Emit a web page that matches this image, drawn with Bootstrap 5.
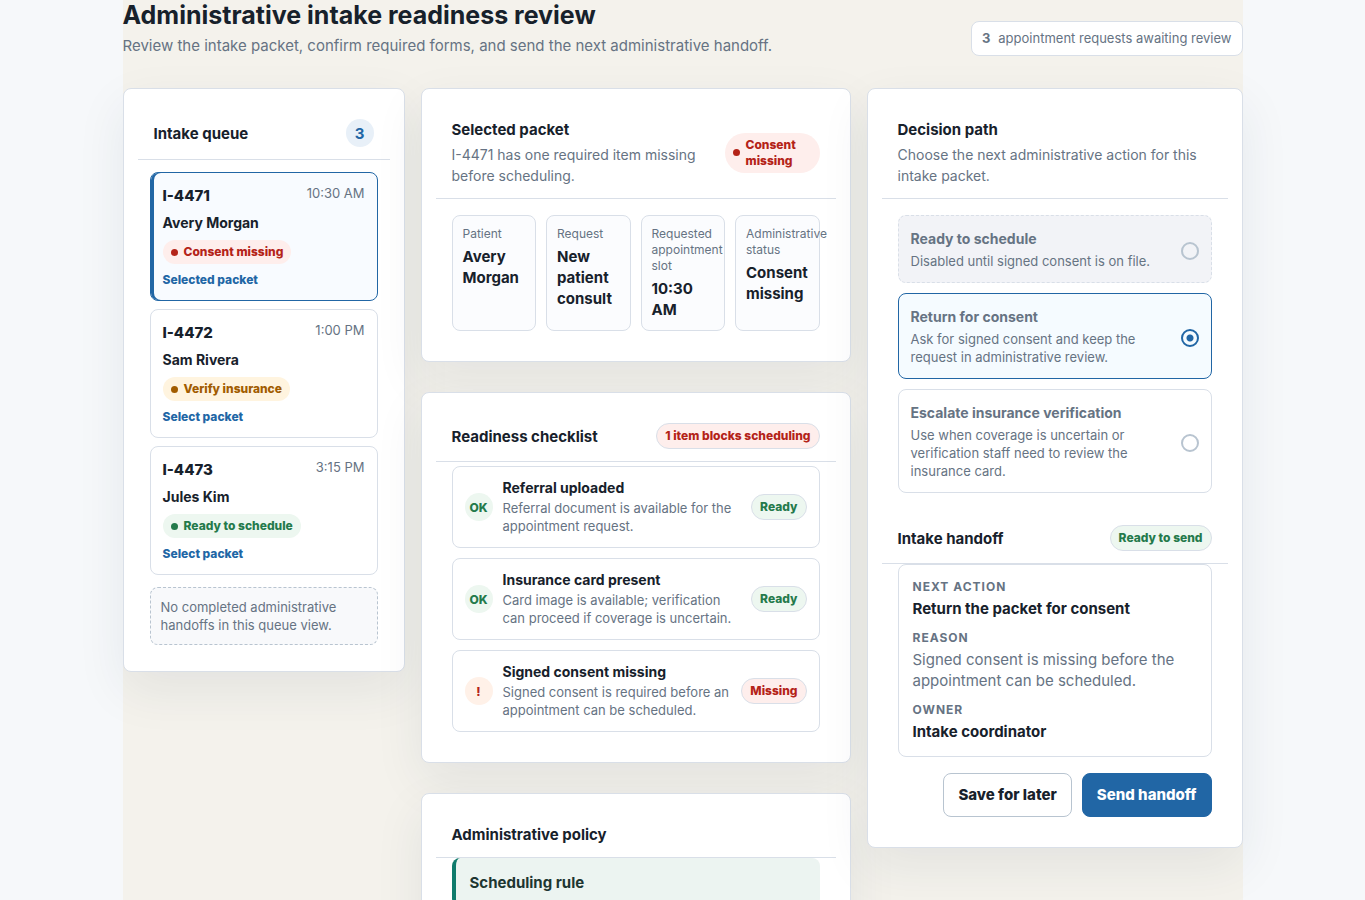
<!DOCTYPE html>
<html lang="en">
<head>
<meta charset="utf-8">
<meta name="viewport" content="width=device-width, initial-scale=1">
<title>Administrative intake readiness review</title>
<link href="https://cdn.jsdelivr.net/npm/bootstrap@5.3.0/dist/css/bootstrap.min.css" rel="stylesheet">
<style>
:root{--ink:#17212b;--muted:#667383;--line:#d9dfe8;--blue:#2166a5;--red:#b42318;--green:#247a4b;--amber:#a15c00}
body{font-family:Inter,sans-serif;font-size:15px;line-height:21px;color:var(--ink);background:#f6f8fa}
button{font-family:inherit}
.page{max-width:1120px;background:#f4f2ec;min-height:100vh}
h1{font-size:25px;line-height:30px;font-weight:700;margin:0 0 6px}
h2{font-size:15px;line-height:21px;font-weight:700;margin:0}
.sub{line-height:20px}
.soft{color:var(--muted)}
.chip{font-size:13px;line-height:17px;padding:8px 10px;border:1px solid var(--line);border-radius:8px;background:#fff;color:var(--muted)}
.board{display:grid;grid-template-columns:minmax(0,1fr);gap:16px;align-items:start;margin-top:32px}
@media (min-width:1100px){.board{grid-template-columns:282px minmax(0,1fr) 376px}}
.stack{display:grid;gap:30px}
.panel{background:#fff;border:1px solid var(--line);border-radius:8px;padding:14px;box-shadow:0 18px 50px rgba(24,50,71,.08)}
.panel-head{display:flex;align-items:center;justify-content:space-between;gap:12px;padding:16px 16px 12px;border-bottom:1px solid var(--line)}
.panel-head p{font-size:14px}
.count{width:28px;height:28px;border-radius:50%;background:#e8f0f8;color:var(--blue);font-weight:700;display:grid;place-items:center}
.queue{padding:12px;display:grid;gap:8px}
.packet{display:grid;gap:7px;justify-items:start;text-align:left;padding:12px 12px 11px;border:1px solid var(--line);border-radius:8px;background:#fff;color:var(--ink)}
.packet.active{border-color:var(--blue);background:#f8fbff;box-shadow:inset 3px 0 0 var(--blue)}
.packet-id{font-size:15px;line-height:21px;font-weight:800}
.packet-time{font-size:13px;line-height:17px;color:var(--muted)}
.packet-name{font-size:14px;line-height:19px;font-weight:700;margin-bottom:1px}
.packet-link{font-size:12px;line-height:18px;font-weight:800;color:var(--blue)}
.status{display:inline-flex;align-items:center;gap:6px;padding:4px 8px;border-radius:20px;font-size:12px;line-height:16px;font-weight:800}
.status::before{content:"";flex:none;width:7px;height:7px;border-radius:50%;background:currentColor}
.tag{flex:none;padding:4px 8px;border:1px solid var(--line);border-radius:20px;font-size:12px;line-height:16px;font-weight:800}
.is-red{background:#feeeec;color:var(--red)}
.is-green{background:#edf7f0;color:var(--green)}
.is-amber{background:#fff4df;color:var(--amber)}
.empty{margin-top:4px;padding:10px;border:1px dashed #b8c4d0;border-radius:8px;background:#f8f9fb;font-size:13px;line-height:18px;color:var(--muted)}
.wide{width:95px}
.facts{display:grid;grid-template-columns:repeat(4,minmax(0,1fr));gap:10px;padding:16px;margin:0}
.fact{padding:10px;border:1px solid var(--line);border-radius:8px;background:#fbfcfe}
.fact dt{font-size:12px;line-height:16px;font-weight:400;color:var(--muted);margin-bottom:4px}
.fact dd{font-weight:700;margin:0}
.checks{display:grid;gap:10px;padding:4px 16px 16px;margin:0;list-style:none}
.check{display:flex;align-items:center;gap:10px;padding:12px;border:1px solid var(--line);border-radius:8px}
.mark-dot{flex:none;width:28px;height:28px;border-radius:50%;display:grid;place-items:center;font-size:12px;font-weight:800}
.mark-dot.warn{background:#fff1e8;color:var(--red)}
.check h3{font-size:14px;line-height:18px;font-weight:700;margin:0 0 2px}
.note{font-size:13px;line-height:18px;color:var(--muted);margin:0}
.rule{margin:0 16px 16px;padding:14px;border-left:4px solid #0f7b6c;border-radius:8px;background:#ecf4f1;color:#1d3631}
.options{display:grid;gap:10px;padding:16px;margin:0}
.option{display:flex;align-items:center;justify-content:space-between;gap:12px;padding:12px;border:1px solid var(--line);border-radius:8px;color:var(--muted)}
.option b{display:block;font-size:14px;line-height:22px;font-weight:700;margin-bottom:2px}
.option .note{display:block;max-width:240px}
.option.off{border-style:dashed;background:#f2f3f7}
.option.on{border-color:var(--blue);background:#f5fbff}
.option input{appearance:none;flex:none;width:18px;height:18px;margin:4px 0 0;border:2px solid #b8c4d0;border-radius:50%}
.option input:checked{border-color:var(--blue);background:radial-gradient(circle,var(--blue) 3px,transparent 4px)}
.handoff{margin:0 16px;padding:14px;border:1px solid var(--line);border-radius:8px}
.handoff dt{font-size:12px;line-height:16px;font-weight:700;letter-spacing:1px;text-transform:uppercase;color:var(--muted);margin-bottom:3px}
.handoff dd{margin:0 0 11px}
.handoff dd:last-child{margin:0}
.actions{display:flex;justify-content:flex-end;gap:10px}
.act{min-height:44px;padding:8px 14px;border-radius:8px;font-size:15px;font-weight:800}
.act-plain{border-color:#b8c4d0;background:#fff;color:var(--ink)}
.act-main{background:var(--blue);border-color:var(--blue);color:#fff}
</style>
</head>
<body>
<main class="page mx-auto pb-5">
  <header class="d-flex flex-wrap justify-content-between align-items-end">
    <div>
      <h1>Administrative intake readiness review</h1>
      <p class="sub soft mb-0">Review the intake packet, confirm required forms, and send the next administrative handoff.</p>
    </div>
    <div class="chip d-flex gap-2"><strong>3</strong><span>appointment requests awaiting review</span></div>
  </header>

  <div class="board">
    <section class="panel">
      <div class="panel-head"><h2>Intake queue</h2><span class="count">3</span></div>
      <div class="queue">
        <button type="button" class="packet active" aria-pressed="true">
          <span class="d-flex justify-content-between w-100"><span class="packet-id">I-4471</span><span class="packet-time">10:30 AM</span></span>
          <span class="packet-name">Avery Morgan</span>
          <span class="status is-red">Consent missing</span>
          <span class="packet-link">Selected packet</span>
        </button>
        <button type="button" class="packet" aria-pressed="false">
          <span class="d-flex justify-content-between w-100"><span class="packet-id">I-4472</span><span class="packet-time">1:00 PM</span></span>
          <span class="packet-name">Sam Rivera</span>
          <span class="status is-amber">Verify insurance</span>
          <span class="packet-link">Select packet</span>
        </button>
        <button type="button" class="packet" aria-pressed="false">
          <span class="d-flex justify-content-between w-100"><span class="packet-id">I-4473</span><span class="packet-time">3:15 PM</span></span>
          <span class="packet-name">Jules Kim</span>
          <span class="status is-green">Ready to schedule</span>
          <span class="packet-link">Select packet</span>
        </button>
        <div class="empty">No completed administrative handoffs in this queue view.</div>
      </div>
    </section>

    <div class="stack">
      <section class="panel">
        <div class="panel-head">
          <div><h2 class="mb-1">Selected packet</h2><p class="soft mb-0">I-4471 has one required item missing before scheduling.</p></div>
          <span class="status is-red wide flex-shrink-0">Consent missing</span>
        </div>
        <dl class="facts">
          <div class="fact"><dt>Patient</dt><dd>Avery Morgan</dd></div>
          <div class="fact"><dt>Request</dt><dd>New patient consult</dd></div>
          <div class="fact"><dt>Requested appointment slot</dt><dd>10:30 AM</dd></div>
          <div class="fact"><dt>Administrative status</dt><dd>Consent missing</dd></div>
        </dl>
      </section>

      <section class="panel">
        <div class="panel-head"><h2>Readiness checklist</h2><span class="tag is-red">1 item blocks scheduling</span></div>
        <ul class="checks">
          <li class="check"><span class="mark-dot is-green">OK</span><div class="flex-grow-1"><h3>Referral uploaded</h3><p class="note">Referral document is available for the appointment request.</p></div><span class="tag is-green">Ready</span></li>
          <li class="check"><span class="mark-dot is-green">OK</span><div class="flex-grow-1"><h3>Insurance card present</h3><p class="note">Card image is available; verification can proceed if coverage is uncertain.</p></div><span class="tag is-green">Ready</span></li>
          <li class="check"><span class="mark-dot warn">!</span><div class="flex-grow-1"><h3>Signed consent missing</h3><p class="note">Signed consent is required before an appointment can be scheduled.</p></div><span class="tag is-red">Missing</span></li>
        </ul>
      </section>

      <section class="panel">
        <div class="panel-head"><h2>Administrative policy</h2></div>
        <div class="rule"><h2>Scheduling rule</h2></div>
      </section>
    </div>

    <section class="panel">
      <div class="panel-head"><div><h2 class="mb-1">Decision path</h2><p class="soft mb-0">Choose the next administrative action for this intake packet.</p></div></div>
      <div class="options" role="radiogroup" aria-label="Decision path">
        <label class="option off"><span><b>Ready to schedule</b><span class="note">Disabled until signed consent is on file.</span></span><input type="radio" name="decision" disabled></label>
        <label class="option on"><span><b>Return for consent</b><span class="note">Ask for signed consent and keep the request in administrative review.</span></span><input type="radio" name="decision" checked></label>
        <label class="option"><span><b>Escalate insurance verification</b><span class="note">Use when coverage is uncertain or verification staff need to review the insurance card.</span></span><input type="radio" name="decision"></label>
      </div>
      <div class="panel-head"><h2>Intake handoff</h2><span class="tag is-green">Ready to send</span></div>
      <dl class="handoff">
        <dt>Next action</dt><dd class="fw-bold">Return the packet for consent</dd>
        <dt>Reason</dt><dd class="soft">Signed consent is missing before the appointment can be scheduled.</dd>
        <dt>Owner</dt><dd class="fw-bold">Intake coordinator</dd>
      </dl>
      <div class="actions p-3">
        <button type="button" class="btn act act-plain">Save for later</button>
        <button type="button" class="btn act act-main">Send handoff</button>
      </div>
    </section>
  </div>
</main>
<script src="https://cdn.jsdelivr.net/npm/bootstrap@5.3.0/dist/js/bootstrap.bundle.min.js"></script>
</body>
</html>
